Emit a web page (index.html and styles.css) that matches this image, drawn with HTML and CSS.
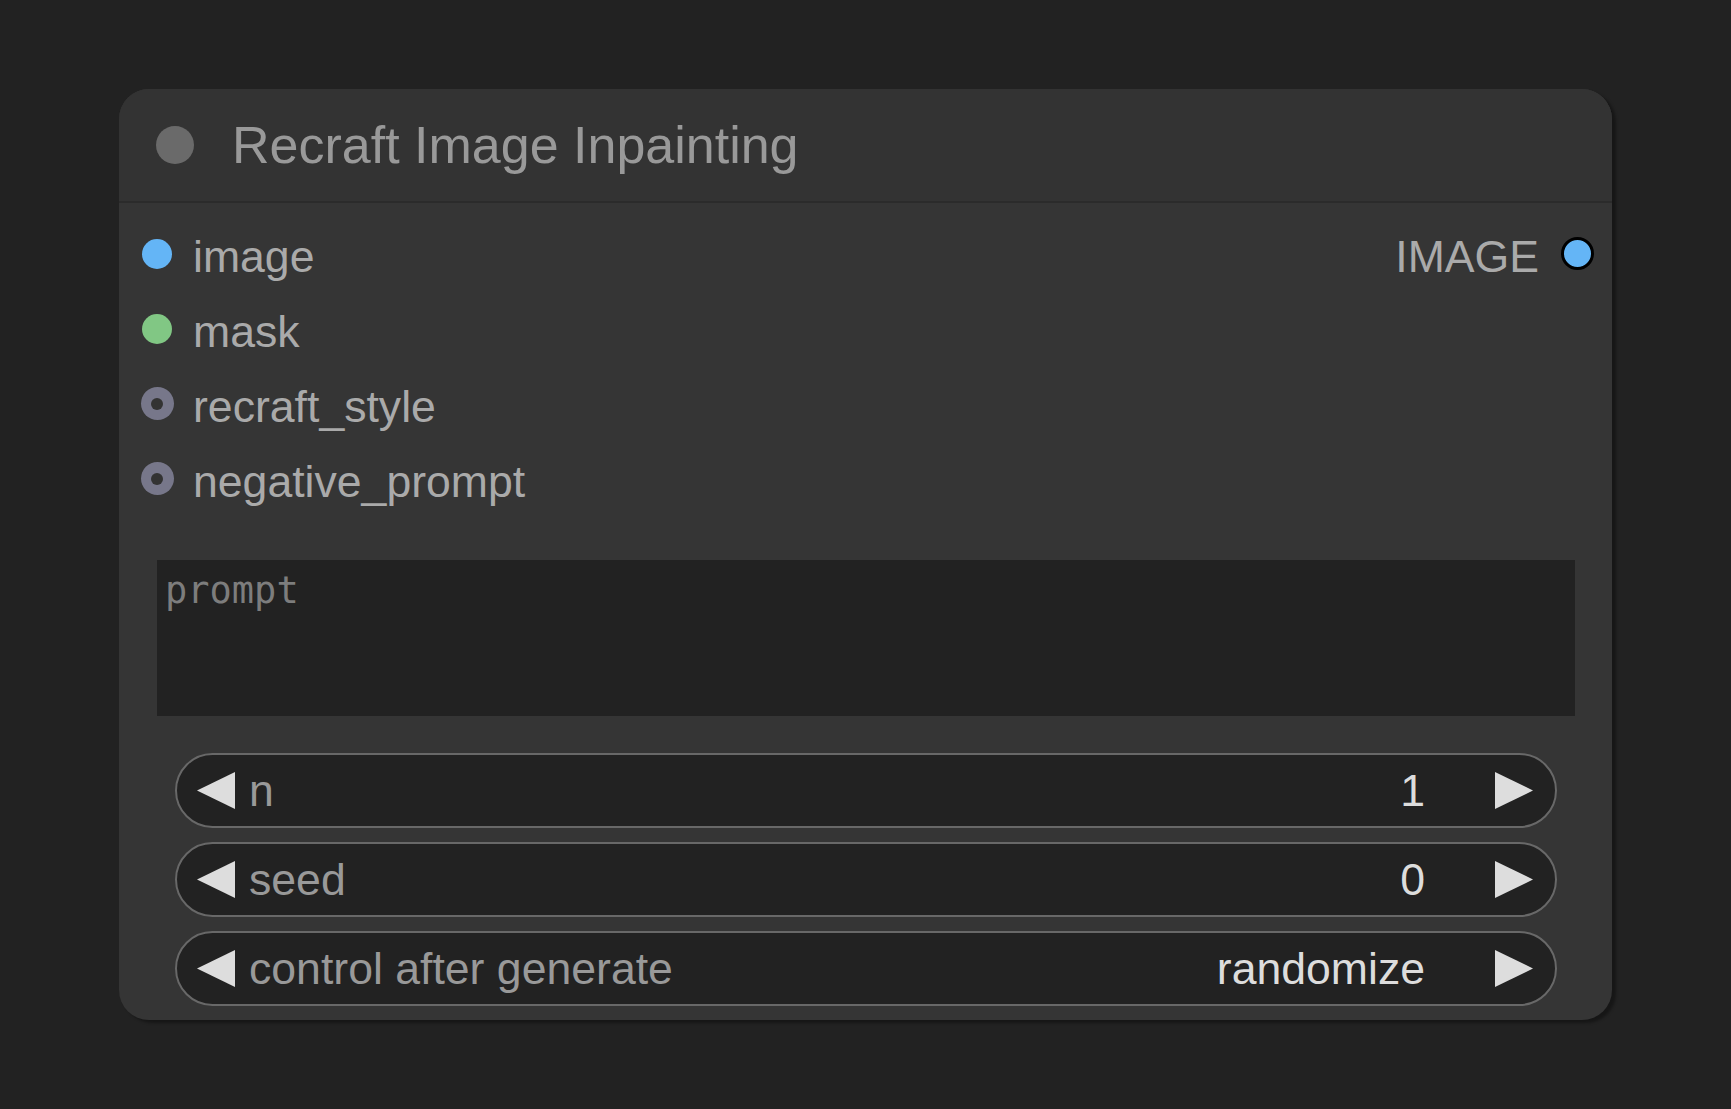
FILE: index.html
```html
<!DOCTYPE html>
<html lang="en">
<head>
<meta charset="utf-8">
<title>Recraft Image Inpainting</title>
<link rel="stylesheet" href="styles.css">
</head>
<body>
<div class="node">
  <div class="node-header">
    <span class="title-dot"></span>
    <span class="title">Recraft Image Inpainting</span>
  </div>
  <div class="node-body">
    <div class="slots">
      <div class="slot-row">
        <div class="slot-in">
          <span class="dot dot-image"></span>
          <span class="slot-label">image</span>
        </div>
        <div class="slot-out">
          <span class="slot-label">IMAGE</span>
          <span class="dot dot-out"></span>
        </div>
      </div>
      <div class="slot-row">
        <div class="slot-in">
          <span class="dot dot-mask"></span>
          <span class="slot-label">mask</span>
        </div>
      </div>
      <div class="slot-row">
        <div class="slot-in">
          <span class="dot dot-widget"><span class="hole"></span></span>
          <span class="slot-label">recraft_style</span>
        </div>
      </div>
      <div class="slot-row">
        <div class="slot-in">
          <span class="dot dot-widget"><span class="hole"></span></span>
          <span class="slot-label">negative_prompt</span>
        </div>
      </div>
    </div>
    <div class="prompt-box"><span class="placeholder">prompt</span></div>
    <div class="widgets">
      <div class="widget">
        <svg class="arrow" width="38" height="37" viewBox="0 0 38 37"><polygon points="38,0 38,37 0,18.5" fill="#dddddd"/></svg>
        <span class="w-label">n</span>
        <span class="w-value">1</span>
        <svg class="arrow arrow-r" width="38" height="37" viewBox="0 0 38 37"><polygon points="0,0 38,18.5 0,37" fill="#dddddd"/></svg>
      </div>
      <div class="widget">
        <svg class="arrow" width="38" height="37" viewBox="0 0 38 37"><polygon points="38,0 38,37 0,18.5" fill="#dddddd"/></svg>
        <span class="w-label">seed</span>
        <span class="w-value">0</span>
        <svg class="arrow arrow-r" width="38" height="37" viewBox="0 0 38 37"><polygon points="0,0 38,18.5 0,37" fill="#dddddd"/></svg>
      </div>
      <div class="widget">
        <svg class="arrow" width="38" height="37" viewBox="0 0 38 37"><polygon points="38,0 38,37 0,18.5" fill="#dddddd"/></svg>
        <span class="w-label">control after generate</span>
        <span class="w-value">randomize</span>
        <svg class="arrow arrow-r" width="38" height="37" viewBox="0 0 38 37"><polygon points="0,0 38,18.5 0,37" fill="#dddddd"/></svg>
      </div>
    </div>
  </div>
</div>
</body>
</html>
```
FILE: styles.css
```css
html, body {
  margin: 0;
  padding: 0;
  background: #222222;
}
body {
  width: 1731px;
  height: 1109px;
  overflow: hidden;
  font-family: "Liberation Sans", Arial, sans-serif;
}
.node {
  margin: 89px 0 0 119px;
  width: 1493px;
  background: #353535;
  border-radius: 30px;
  box-shadow: 4px 3px 3px rgba(0, 0, 0, 0.35);
  overflow: hidden;
}
.node-header {
  height: 112px;
  background: #333333;
  border-bottom: 2px solid #2b2b2b;
  display: flex;
  align-items: center;
  padding-left: 37px;
}
.title-dot {
  width: 38px;
  height: 38px;
  border-radius: 50%;
  background: #6a6a6a;
  flex: none;
}
.title {
  margin-left: 38px;
  font-size: 52px;
  line-height: 58px;
  color: #999999;
  white-space: nowrap;
}
.node-body {
  padding: 13px 0 14px 0;
}
.slots {
  display: flex;
  flex-direction: column;
}
.slot-row {
  height: 75px;
  display: flex;
  align-items: center;
  justify-content: space-between;
  padding: 0 18px 0 23px;
}
.slot-in, .slot-out {
  display: flex;
  align-items: center;
}
.dot {
  width: 30px;
  height: 30px;
  border-radius: 50%;
  flex: none;
  display: flex;
  align-items: center;
  justify-content: center;
  box-sizing: border-box;
}
.dot-image { background: #64b5f6; }
.dot-mask { background: #81c784; }
.dot-widget {
  width: 33px;
  height: 33px;
  margin: 0 -1.5px;
  background: #77778a;
}
.hole {
  width: 12px;
  height: 12px;
  border-radius: 50%;
  background: #333333;
}
.dot-out {
  width: 33px;
  height: 33px;
  background: #64b5f6;
  border: 3px solid #000000;
  margin-left: 22px;
}
.slot-label {
  font-size: 44.6px;
  line-height: 50px;
  margin-top: 6px;
  color: #aaaaaa;
  white-space: nowrap;
}
.slot-in .slot-label {
  margin-left: 21px;
}
.prompt-box {
  margin: 44px 37px 0 38px;
  height: 156px;
  background: #222222;
  padding: 10px 10px 0 8px;
  box-sizing: border-box;
}
.placeholder {
  font-family: "DejaVu Sans Mono", "Liberation Mono", monospace;
  font-size: 37px;
  line-height: 42px;
  color: #7d7d7d;
}
.widgets {
  margin: 37px 55px 0 56px;
  display: flex;
  flex-direction: column;
  gap: 14px;
}
.widget {
  height: 75px;
  box-sizing: border-box;
  border: 2px solid #686868;
  border-radius: 38px;
  background: #222222;
  display: flex;
  align-items: center;
  padding: 0 22px 0 20px;
}
.arrow {
  flex: none;
  display: block;
}
.w-label {
  margin-left: 14px;
  flex: 1;
  font-size: 44.6px;
  line-height: 50px;
  color: #999999;
  white-space: nowrap;
}
.w-value {
  font-size: 44.6px;
  line-height: 50px;
  color: #dddddd;
  white-space: nowrap;
  margin-right: 70px;
}
```
